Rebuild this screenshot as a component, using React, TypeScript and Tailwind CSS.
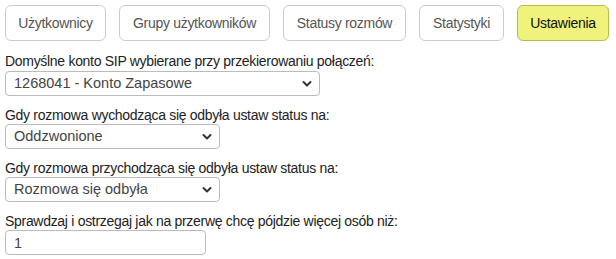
import React from 'react';

const tabs = [
  { label: 'Użytkownicy', w: 'w-[101px]' },
  { label: 'Grupy użytkowników', w: 'w-[151px]' },
  { label: 'Statusy rozmów', w: 'w-[123px]' },
  { label: 'Statystyki', w: 'w-[85px]' },
  { label: 'Ustawienia', w: 'w-[92px]' },
];

const Chevron = () => (
  <svg width="10" height="7" viewBox="0 0 10 7" className="absolute right-[7px] top-1/2 -translate-y-1/2">
    <polyline points="1.5,1.5 5,5 8.5,1.5" fill="none" stroke="#333" strokeWidth="2" strokeLinecap="round" strokeLinejoin="round" />
  </svg>
);

const Select = ({ value, width }: { value: string; width: string }) => (
  <div className={`relative h-[25px] ${width} rounded-[4px] border border-[#bbb] bg-white`}>
    <div className="pl-[8px] text-[14.5px] leading-[23px] tracking-normal text-[#444] font-['Liberation_Sans',Arial,sans-serif]">{value}</div>
    <Chevron />
  </div>
);

const App: React.FC = () => {
  return (
    <div className="w-[616px] h-[259px] bg-white pl-[5px] pt-[5px] font-['Liberation_Sans',Arial,sans-serif] text-[#222]">
      {/* zakładki */}
      <div className="flex gap-[13px]">
        {tabs.map((t) => (
          <button
            key={t.label}
            className={
              t.label === 'Ustawienia'
                ? `h-[36px] ${t.w} shrink-0 whitespace-nowrap rounded-[6px] border border-[#b9bd4f] bg-[#f0f37b] text-[14px] tracking-[-0.3px] text-[#111]`
                : `h-[36px] ${t.w} shrink-0 whitespace-nowrap rounded-[6px] border border-[#ccc] bg-white text-[14px] tracking-[-0.3px] text-[#555]`
            }
          >
            {t.label}
          </button>
        ))}
      </div>

      <div className="mt-[11px] flex flex-col gap-[10px] text-[14px] tracking-[-0.3px]">
        <div>
          <div className="leading-[19px]">Domyślne konto SIP wybierane przy przekierowaniu połączeń:</div>
          <Select value="1268041 - Konto Zapasowe" width="w-[315px]" />
        </div>
        <div>
          <div className="leading-[18px]">Gdy rozmowa wychodząca się odbyła ustaw status na:</div>
          <Select value="Oddzwonione" width="w-[215px]" />
        </div>
        <div>
          <div className="leading-[18px]">Gdy rozmowa przychodząca się odbyła ustaw status na:</div>
          <Select value="Rozmowa się odbyła" width="w-[215px]" />
        </div>
        <div>
          <div className="leading-[18px]">Sprawdzaj i ostrzegaj jak na przerwę chcę pójdzie więcej osób niż:</div>
          <input
            defaultValue="1"
            className="block h-[25px] w-[201px] rounded-[4px] border border-[#bbb] bg-white pl-[8px] text-[14.5px] tracking-normal text-[#444] outline-none"
          />
        </div>
      </div>
    </div>
  );
};

export default App;
